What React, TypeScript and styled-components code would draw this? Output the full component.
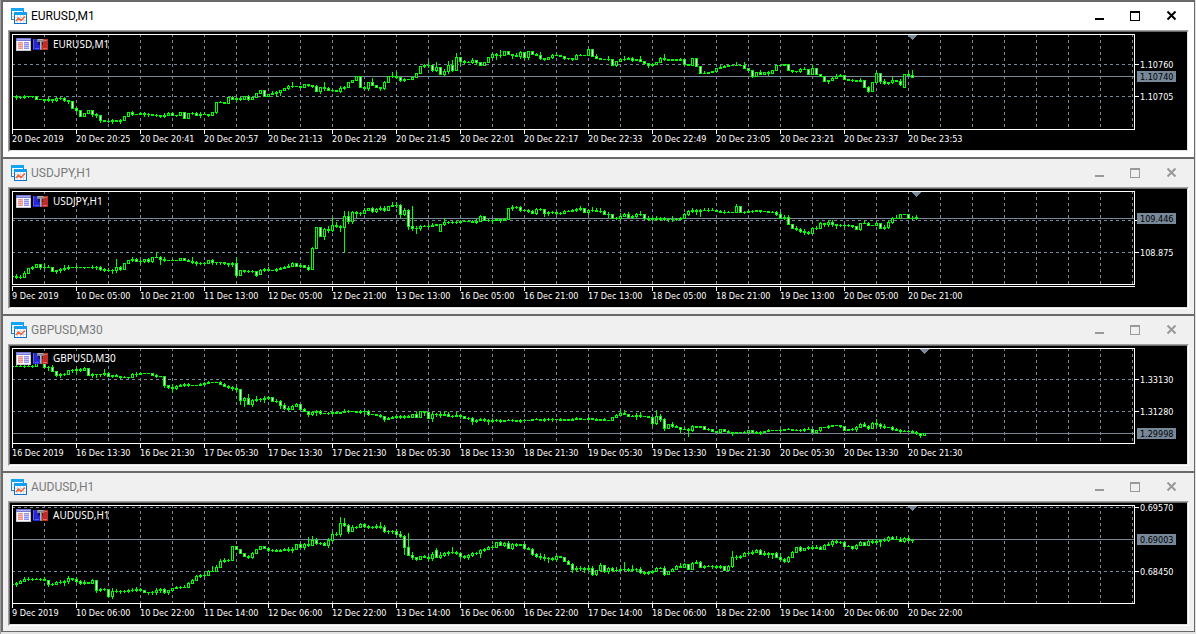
import React from "react";
import styled, { createGlobalStyle, css } from "styled-components";

const SLATE = "#778899";
const LIME = "#00ff00";
const STEP = 4;
const AXIS_FONT = '"DejaVu Sans Condensed", "DejaVu Sans", sans-serif';

const GlobalStyle = createGlobalStyle`
  *, *::before, *::after { box-sizing: border-box; }
  body { margin: 0; background: #e3e3e3; }
`;

const Workspace = styled.main`
  border-left: 1px solid #a0a0a0;
  border-right: 1px solid #e3e3e3;
  padding-bottom: 2px;
`;

const ChartWindow = styled.section<{ $active: boolean }>`
  display: flex;
  flex-direction: column;
  padding-bottom: 5px;
  background: ${(p) => (p.$active ? "#ffffff" : "#f0f0f0")};
  color: ${(p) => (p.$active ? "#000000" : "#999999")};
  border: solid #696969;
  border-width: 2px 1px 0 2px;

  &:last-child { border-bottom-width: 1px; }
`;

const TitleBar = styled.header`
  display: flex;
  align-items: center;
  gap: 4px;
  height: 28px;
  padding: 0 5px 0 8px;
`;

const Title = styled.h2<{ $active: boolean }>`
  flex: 1;
  margin: 0;
  font: 400 12px/16px Roboto, sans-serif;
  color: ${(p) => (p.$active ? "#000000" : "#7a7a7a")};
`;

const WindowButtons = styled.div`
  display: flex;
`;

const WindowButton = styled.button`
  display: flex;
  align-items: center;
  justify-content: center;
  width: 36px;
  height: 28px;
  padding: 0;
  border: 0;
  background: none;
  color: inherit;
`;

const SunkenFrame = styled.div`
  margin: 0 5px;
  border: 1px solid;
  border-color: #a0a0a0 #ffffff #ffffff #a0a0a0;
`;

const ChartSurface = styled.div`
  display: grid;
  grid-template-columns: minmax(0, 1fr) 52px;
  padding: 2px 0 0 2px;
  border: 1px solid;
  border-color: #696969 #e3e3e3 #e3e3e3 #696969;
  background: #000000;
`;

const Plot = styled.div<{ $height: number }>`
  position: relative;
  height: ${(p) => p.$height}px;
  border: 1px solid #ffffff;
  overflow: hidden;
`;

const Drawing = styled.svg`
  display: block;
  width: 100%;
  height: 100%;
  overflow: hidden;
`;

const Scale = styled.svg<{ $height: number }>`
  display: block;
  width: 100%;
  height: ${(p) => p.$height}px;
  overflow: visible;
`;

const Legend = styled.div`
  position: absolute;
  top: 3px;
  left: 3px;
  display: flex;
  align-items: center;
  gap: 2px;
  height: 13px;
`;

const LegendText = styled.span`
  padding-left: 3px;
  font: 10px/13px "Noto Sans", sans-serif;
  color: #ffffff;
`;

const TimeAxis = styled.ol<{ $split: boolean }>`
  display: flex;
  grid-column: 1;
  height: 20px;
  margin: 0;
  padding: 0;
  list-style: none;
  overflow: hidden;
  ${(p) =>
    p.$split &&
    css`
      height: 22px;
      padding-top: 1px;
      border-top: 1px solid #000000;
      box-shadow: inset 0 1px 0 #ffffff;
    `}
`;

const TimeLabel = styled.li`
  flex: 0 0 64px;
  padding-top: 4px;
  font: 9px/10px ${AXIS_FONT};
  color: #ffffff;
  white-space: nowrap;
  background: linear-gradient(#ffffff, #ffffff) 0 0 / 1px 4px no-repeat;
`;

const PriceText = styled.text`
  font: 9px ${AXIS_FONT};
`;

type Candle = { high: number; open: number; close: number; low: number };

/*
 * A series is a list of closes, measured downwards in scale units. Each candle
 * opens at the previous close unless "open>" precedes it. After a colon come
 * the upper and lower wick lengths, one base-36 digit each.
 */
function parseSeries(source: string): Candle[] {
  let previous = NaN;
  return source
    .trim()
    .split(/\s+/)
    .map((token) => {
      const [body, wicks = ""] = token.split(":");
      const parts = body.split(">").map(Number);
      const close = parts[parts.length - 1];
      const open = parts.length > 1 ? parts[0] : Number.isNaN(previous) ? close : previous;
      previous = close;
      return {
        open,
        close,
        high: Math.min(open, close) - parseInt(wicks[0] ?? "0", 36),
        low: Math.max(open, close) + parseInt(wicks[1] ?? "0", 36),
      };
    });
}

function candlePaths(candles: Candle[], top: number) {
  const bar = (x: number, y: number, w: number, h: number) => `M${x} ${y}h${w}v${h}h${-w}z`;
  let bodies = "";
  let wicks = "";
  let rising = "";
  let falling = "";
  candles.forEach((c, i) => {
    const x = i * STEP - 1;
    const bodyTop = Math.min(c.open, c.close);
    const size = Math.abs(c.open - c.close) + 1;
    bodies += bar(x - 1, bodyTop - top, 3, size);
    wicks += bar(x, c.high - top, 1, c.low - c.high + 1);
    if (size > 2) {
      const inner = bar(x, bodyTop - top + 1, 1, size - 2);
      if (c.close < c.open) rising += inner;
      else falling += inner;
    }
  });
  return { bodies, wicks, rising, falling };
}

type Chart = {
  symbol: string;
  height: number;
  split?: boolean;
  top: number;
  grid: number[];
  labels: { y: number; text: string }[];
  price: { y: number; text: string };
  marker: number;
  times: string[];
  series: string;
};

const charts: Chart[] = [
  {
    symbol: "EURUSD,M1",
    height: 96,
    top: 35,
    grid: [64, 96],
    labels: [
      { y: 64, text: "1.10760" },
      { y: 96, text: "1.10705" },
    ],
    price: { y: 76, text: "1.10740" },
    marker: 912,
    times: [
      "20 Dec 2019", "20 Dec 20:25", "20 Dec 20:41", "20 Dec 20:57", "20 Dec 21:13",
      "20 Dec 21:29", "20 Dec 21:45", "20 Dec 22:01", "20 Dec 22:17", "20 Dec 22:33",
      "20 Dec 22:49", "20 Dec 23:05", "20 Dec 23:21", "20 Dec 23:37", "20 Dec 23:53",
    ],
    series: `
      96 97:12 97:11 96:11 96:01 96:01 99 99 100:01 99:21 100:02 98:11 98:11 100:11 101:02 108
      110:11 116 113 110 114:02 115:12 120:02 121 121:11 120:12 121 120:12 116 112 114:11 114
      113:1 114:12 114:12 115 115:11 116:01 115:21 113:1 115:1 115:01 112 118 113 113:11 115:1
      114:22 114:2 115:01 112 102:01 102:1 103 97 99:1 98:12 99:11 96 99:11 97 93 90 96 94
      93:2 92:13 90:03 88 86:11 86:41 86 87 84 85:01 86:01 91:1 87:02 88:52 90:1 90:11 91
      88:21 87:11 82 80 76 87 88:11 82:02 85:4 87 88:02 82:11 76 76:41 77:41 80:01 79:11 79
      77 73 66 65:11 65:42 70:01 67:51 74 71:21 65:42 70:51 57:4 61:04 62:11 62:1 60:21 62:02
      65 62 57 54:11 55:14 55:52 51 54 55:03 56:2 52:12 57:02 51:02 54 55:1 58:31 59:01 57
      55:11 55:2 56 58:01 58:01 59:01 55:1 55:1 55 49 56 58:2 59 59 59:31 65 61:01 59:1 59:31
      58:1 60:11 59 61:3 63 65:02 64:1 62 58:1 59:41 60 59 60 59:1 64 65 58 66 73 73:2 72 71
      68 67:2 66:1 65 65 65:3 65 68:3 70 76:01 72 74:2 72 73:12 70 65 65 64 70 71:01 71:01
      69:11 69:2 74 68:3 74 76 81 80:02 78:1 76:2 75:1 79 80 80:11 81 80:2 87 91:11 82 73:2
      81:02 83:21 82:01 80:31 81 84:21 87>74 75:3 77:5`,
  },
  {
    symbol: "USDJPY,H1",
    height: 94,
    split: true,
    top: 32,
    grid: [60, 92],
    labels: [
      { y: 60, text: "" },
      { y: 92, text: "108.875" },
    ],
    price: { y: 58, text: "109.446" },
    marker: 916,
    times: [
      "9 Dec 2019", "10 Dec 05:00", "10 Dec 21:00", "11 Dec 13:00", "12 Dec 05:00",
      "12 Dec 21:00", "13 Dec 13:00", "16 Dec 05:00", "16 Dec 21:00", "17 Dec 13:00",
      "18 Dec 05:00", "18 Dec 21:00", "19 Dec 13:00", "20 Dec 05:00", "20 Dec 21:00",
    ],
    series: `
      116 117:21 117:21 113:2 108 107:11 104 107:02 107:41 107:2 111 110:02 109:12 108:31
      107:21 107 107:21 107 107:01 107 107:21 107:12 109:11 110:11 110:21 110:13 107:82
      109:11 103 100 99:21 101:1 101:12 99:01 101:11 97:01 97:5 99:15 100:21 100 100:1 100
      98 100 101:1 102:41 103:12 103:11 103:11 100 102:12 102:02 102:02 103:01 104:02 103:12
      115:61 110 111:01 111:11 111:11 115:01 114>110:1 109:11 110:2 110 109:11 108:1 107:1
      106:2 103:1 106 105:21 107 109:21 88:1 67 76 69:13 70:32 65:71 66:31 67:14 56:5p 61:52
      52:12 53:14 53:12 50:2 48 51:11 49:11 48:21 50:21 46 45:3 45:32 54:13 50:21 66:13 68:k2
      68:25 66:12 66:1 66:21 65:2 64 71>64 62:41 62:11 62:21 62:11 61:1 61:1 61:1 62:1 61:21
      56:1 60 60:11 60:13 59:1 60:02 59:1 48 47:22 47:11 50:11 50:1 51:11 53:1 49:11 49:11
      53:03 52:12 52:11 53:11 53:11 51:1 51:1 50:1 49:11 48:21 52 50:12 50:31 51:2 51:31 54:1
      54:23 58 58:11 56:31 54:1 57:2 56:11 54:11 54:31 58:01 59:21 58:11 59:21 58:11 59:11
      59:12 59:32 59:11 58:1 54:1 51:11 50:21 51:13 50:15 50:2 50:21 50:2 51 52:1 52:21 52:1
      52 46:2 52 52:11 51:1 51:11 50 51:01 51 52 52:1 54:11 58:2 57:21 64:2 68 69:21 71:11
      72:22 73:11 68:1 68:21 63:1 64:02 62:22 64:22 65:03 65:11 65:12 65:11 66:01 69 63:01
      63:3 65:1 65 63:1 68 67:21 62:11 58:11 58:3 54 54 58 58:21 57:21`,
  },
  {
    symbol: "GBPUSD,M30",
    height: 96,
    top: 32,
    grid: [62, 94],
    labels: [
      { y: 62, text: "1.33130" },
      { y: 94, text: "1.31280" },
    ],
    price: { y: 116, text: "1.29998" },
    marker: 924,
    times: [
      "16 Dec 2019", "16 Dec 13:30", "16 Dec 21:30", "17 Dec 05:30", "17 Dec 13:30",
      "17 Dec 21:30", "18 Dec 05:30", "18 Dec 13:30", "18 Dec 21:30", "19 Dec 05:30",
      "19 Dec 13:30", "19 Dec 21:30", "20 Dec 05:30", "20 Dec 13:30", "20 Dec 21:30",
    ],
    series: `
      49 49:1 49:1 49:11 49:1 49:11 46 46:1 50 50:13 54:2 58:01 57:12 57:11 53 53:12 52:13
      53:11 51:1 58 57:12 57:03 57:02 56:41 59:1 58:01 59:1 60:01 60:1 60:01 57:1 57:22 56:1
      56 56 58 59:11 59 68:02 70:01 71:34 69:11 68:1 67:11 68:11 68 68 67:1 66:11 65:1 65 65
      67:1 69:1 70:11 71:12 72:22 83:04 81:16 87:4 83:12 82:31 82:12 81:23 80:11 84 84:21
      88:13 91:21 92:21 89:1 87:1 92 94:1 97:02 95:11 94:13 96:11 96 96:11 95:11 96:1 95 94:2
      94:11 94 95 94:11 94:13 97:11 97 98 99:11 102:02 101:1 100:1 99:11 100:11 99:11 100:1
      97 100:2 94 95:03 101 97:23 97:12 98:22 97:3 99:2 99:11 98:3 99:12 101 101:11 104:13
      103:11 102:1 103:11 104:13 103:21 103:11 104:11 103 103:1 103:11 104 103:11 103:1 103
      102 102:1 103 102:11 102:11 102:12 102 103:1 102 103 102:1 101:1 102 102 101:1 102
      103:1 102 103:1 103 100 98:1 96:3 97:3 99 99:1 98:23 99:31 99 100 106:02 99:61 102:22
      111:12 107 109:21 110:1 112:03 112:2 113:16 109:11 110 109 112 112:11 114 115 112 114
      115:1 116:02 115 115 115:1 113 115 116:1 115:11 114 113:1 113 113 113:11 112 112:1 113
      113:1 113:11 112:11 112:2 115 113 110:01 110 109:11 108 108 109:01 113 112 112:11
      110:12 107:1 109:2 111:11 106:1 107:43 109:12 110:21 110 112:11 113:1 114:11 114:1
      114:1 115:1 116:11 118:02 116`,
  },
  {
    symbol: "AUDUSD,H1",
    height: 99,
    top: 32,
    grid: [33, 97],
    labels: [
      { y: 33, text: "0.69570" },
      { y: 97, text: "0.68450" },
    ],
    price: { y: 65, text: "0.69003" },
    marker: 912,
    times: [
      "9 Dec 2019", "10 Dec 06:00", "10 Dec 22:00", "11 Dec 14:00", "12 Dec 06:00",
      "12 Dec 22:00", "13 Dec 14:00", "16 Dec 06:00", "16 Dec 22:00", "17 Dec 14:00",
      "18 Dec 06:00", "18 Dec 22:00", "19 Dec 14:00", "20 Dec 06:00", "20 Dec 22:00",
    ],
    series: `
      110 109:12 107:1 105:2 105:21 105:11 105:1 105:11 106:2 110:02 110:11 108:1 108:21
      107:13 104:22 105:01 107:21 109:11 108:21 109 109>106:1 116:02 115:11 115:11 122:01
      117:32 117:21 117:12 117:11 116:11 116:21 115:21 116:1 118 118:02 118:12 116:22 115:12
      118:11 116:02 114 113:1 113:11 113:2 109:1 106:1 102:1 101:11 101:21 97:1 97:5 93:2
      87:2 86:21 86:11 72 75 79 82 83:11 79:11 75 72 74 76:11 76:11 77:1 76:1 75:1 76:21
      75:22 70 73:1 70:12 71:71 66:4 69:21 69:11 71:1 66:22 60:21 60:21 49:62 51:51 57:12
      53:2 53:11 50:1 52:11 53:11 53:11 52:21 53:41 57:21 57:12 57:12 60:2 62:31 73:17 81:e0
      83:32 85:01 82 83:1 84:22 80:22 76>83:2 81:31 79:11 78:12 78:51 79:11 82:12 83:11 81:12
      79:11 79:11 76:14 75:11 73:1 73:2 68 71:1 69:11 74:2 70:11 71:11 70 74 75:1 80:11 82:11
      83:32 84:32 84:14 85:11 82:12 83 87 90:1 95:13 94:22 94:22 95:13 94:31 100:21 96:01
      91:2 97:01 94:12 96:11 96:31 95:11 95:71 96:11 95:41 95:12 98:21 99:11 98:11 97:11 94:1
      94:1 100:21 97 95:1 92:1 93:3 90:1 95 89:1 88:2 93:1 92:11 92:1 92:12 93:11 92:11 96
      92:1 83:61 83:22 82:11 79:1 79:21 78:21 76:1 80:1 79:21 80:13 79:04 83:1 85:41 87:11
      83:11 78:1 73 76:11 74 73:11 74:21 73:2 75:1 71:1 70:2 67:12 68:21 68:11 72:1 72:1
      74:01 71:11 68:1 71 67:1 68:21 67:22 66:15 66:21 63:11 65:1 65:3 67:2 64:11 66:21
      66:12`,
  },
];

const AppIcon = () => (
  <svg width="16" height="16" viewBox="0 0 16 16" aria-hidden="true">
    <path fill="#1583dd" d="M0 0h13v12H0z" />
    <path fill="#18a4f5" d="M0 0h13v3H0z" />
    <path fill="#ffffff" d="M1 3h11v8H1z" />
    <path fill="#c9dcea" d="M1 5h2v1H1zM1 8h2v1H1z" />
    <path fill="#0c72d0" d="M3 4h13v12H3z" />
    <path fill="#12a0f4" d="M3 4h13v3H3z" />
    <path fill="#ffffff" d="M4 7h11v8H4z" />
    <path stroke="#d5dee6" d="M6.500 7v8M9.500 7v8M12.500 7v8M4 9.500h11M4 12.500h11" />
    <path fill="none" stroke="#f4622e" strokeWidth="1.400" d="M5 13l2.500-3 2.500 2.500L14 8.500" />
  </svg>
);

const ListIcon = () => (
  <svg width="15" height="13" viewBox="0 0 15 13" aria-hidden="true">
    <path fill="#c8c8d4" d="M0 0h15v13H0z" />
    <path fill="#7678d8" d="M0 0h15v3H0z" />
    <path fill="#a9abf0" d="M1 1h13v1H1z" />
    <path fill="#ffffff" d="M1 3h13v9H1z" />
    <path fill="#f6b8b4" d="M2 4h5v7H2z" />
    <path fill="#c4c5fa" d="M8 4h5v7H8z" />
    <path stroke="#f0908a" d="M2 4.500h5M2 6.500h5M2 8.500h5M2 10.500h5" />
    <path stroke="#8c8ef2" d="M8 4.500h5M8 6.500h5M8 8.500h5M8 10.500h5" />
  </svg>
);

const TradeIcon = () => (
  <svg width="15" height="13" viewBox="0 0 15 13" aria-hidden="true">
    <path fill="#2626d8" d="M0 1h7v11H0z" />
    <path fill="#5c5cf4" d="M0 1h1v10H0zM2 10h4v1H2z" />
    <path fill="#14146a" d="M5 4h2v3H5z" />
    <path fill="#bf2d28" d="M9 1h6v11H9z" />
    <path fill="#dc6a64" d="M11 2h3v1h-3zM10 10h4v1h-4z" />
    <path fill="#6c1814" d="M9 4h1v3H9z" />
    <path fill="#848484" d="M4 1h7v3H9v8H7V4H4z" />
    <path fill="#b4b4b4" d="M5 1h5v1H5zM7 3h1v8H7z" />
  </svg>
);

const buttons = [
  { name: "Minimize", shape: <path fill="currentColor" d="M1 7h9v2H1z" /> },
  {
    name: "Maximize",
    shape: <path fill="currentColor" fillRule="evenodd" d="M0 0h10v10H0zM1 2v7h8V2z" />,
  },
  {
    name: "Close",
    shape: <path fill="none" stroke="currentColor" strokeWidth="2" d="M1.500.500l8 8M9.500.500l-8 8" />,
  },
];

function PlotDrawing({ chart, id }: { chart: Chart; id: string }) {
  const { top, grid, price, marker, series } = chart;
  const { bodies, wicks, rising, falling } = candlePaths(parseSeries(series), top);
  return (
    <Drawing shapeRendering="crispEdges" role="img" aria-label={`${chart.symbol} candles`}>
      <defs>
        <pattern id={id} x="0" y="-1" width="32" height="6" patternUnits="userSpaceOnUse">
          <path fill={SLATE} d="M31 0h1v3h-1z" />
        </pattern>
      </defs>
      <rect width="100%" height="100%" fill={`url(#${id})`} />
      {grid.map((y) => (
        <line
          key={y}
          x1="0"
          x2="100%"
          y1={y - top + 0.5}
          y2={y - top + 0.5}
          stroke={SLATE}
          strokeDasharray="3 3"
          strokeDashoffset="1"
        />
      ))}
      <rect y={price.y - top} width="100%" height="1" fill={SLATE} />
      <path fill={SLATE} d={`M${marker - 17} 0h9v1h-1v1h-1v1h-1v1h-1v1h-1v-1h-1v-1h-1v-1h-1v-1h-1z`} />
      <path fill={LIME} d={bodies} />
      <path fill={LIME} d={wicks} />
      <path fill="#000000" d={rising} />
      <path fill="#ffffff" d={falling} />
    </Drawing>
  );
}

function PriceScale({ chart }: { chart: Chart }) {
  const offset = 1 - chart.top;
  const boxY = chart.price.y + offset;
  return (
    <Scale $height={chart.height}>
      {chart.labels.map(({ y, text }) => (
        <React.Fragment key={y}>
          <rect y={y + offset} width="4" height="1" fill="#ffffff" />
          {text && (
            <PriceText x="5" y={y + offset + 4} fill="#ffffff">
              {text}
            </PriceText>
          )}
        </React.Fragment>
      ))}
      <rect x="2" y={boxY - 5} width="39" height="11" fill={SLATE} />
      <PriceText x="5" y={boxY + 4} fill="#000000">
        {chart.price.text}
      </PriceText>
    </Scale>
  );
}

export default function App() {
  return (
    <>
      <GlobalStyle />
      <Workspace>
        {charts.map((chart, index) => (
          <ChartWindow key={chart.symbol} $active={index === 0}>
            <TitleBar>
              <AppIcon />
              <Title $active={index === 0}>{chart.symbol}</Title>
              <WindowButtons>
                {buttons.map(({ name, shape }) => (
                  <WindowButton key={name} type="button" aria-label={name}>
                    <svg width="10" height="10" viewBox="0 0 10 10">
                      {shape}
                    </svg>
                  </WindowButton>
                ))}
              </WindowButtons>
            </TitleBar>
            <SunkenFrame>
              <ChartSurface>
                <Plot $height={chart.height}>
                  <PlotDrawing chart={chart} id={`grid-${index}`} />
                  <Legend>
                    <ListIcon />
                    <TradeIcon />
                    <LegendText>{chart.symbol}</LegendText>
                  </Legend>
                </Plot>
                <PriceScale chart={chart} />
                <TimeAxis $split={Boolean(chart.split)}>
                  {chart.times.map((time) => (
                    <TimeLabel key={time}>{time}</TimeLabel>
                  ))}
                </TimeAxis>
              </ChartSurface>
            </SunkenFrame>
          </ChartWindow>
        ))}
      </Workspace>
    </>
  );
}
